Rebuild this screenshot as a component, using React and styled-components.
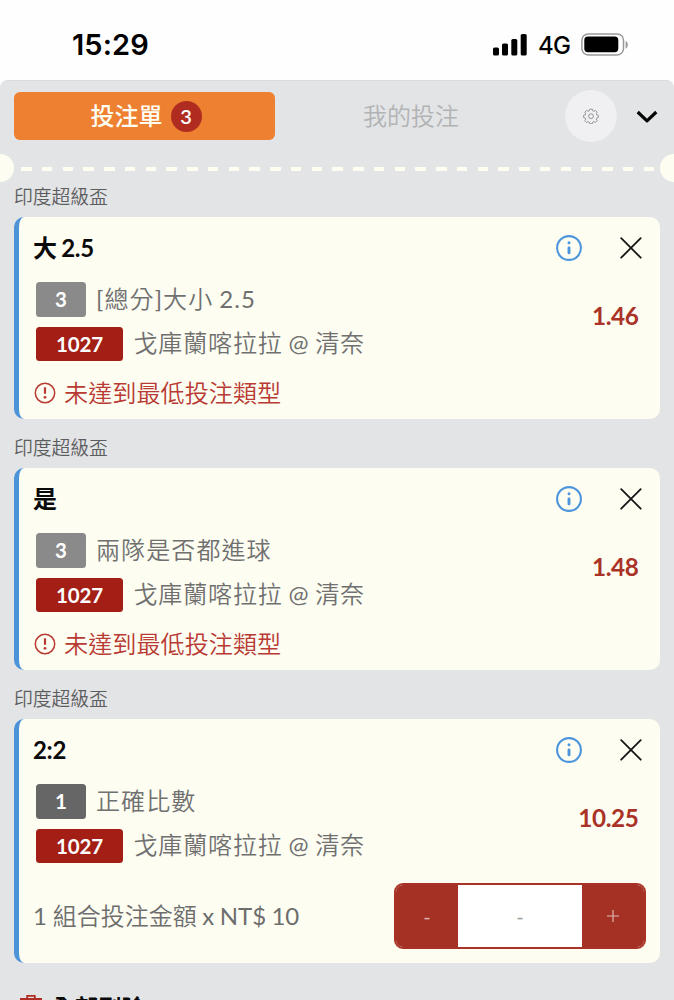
import React from "react";
import styled, { createGlobalStyle } from "styled-components";

const GlobalStyle = createGlobalStyle`
  * { box-sizing: border-box; }
  html, body { margin: 0; padding: 0; height: 1000px; overflow: hidden; background: #fff; }
  body { font-family: Lato, "Noto Sans CJK TC", sans-serif; }
  button { font: inherit; border: 0; padding: 0; background: none; color: inherit; }
  svg { display: block; flex: none; }
`;

const Screen = styled.main`
  width: 674px;
  height: 1000px;
  overflow: hidden;
  display: flex;
  flex-direction: column;
  background: #fefefe;
`;

const StatusBar = styled.header`
  flex: none;
  height: 80px;
  padding: 9px 46px 0 72px;
  display: flex;
  align-items: center;
  justify-content: space-between;
  font-family: Inter, sans-serif;
  color: #000;
`;

const Clock = styled.span`
  font-size: 29px;
  font-weight: 600;
  letter-spacing: 0.1px;
`;

const StatusIcons = styled.div`
  display: flex;
  align-items: center;
`;

const Network = styled.span`
  font-size: 24px;
  font-weight: 500;
  letter-spacing: -0.8px;
  width: 54px;
  padding-left: 11px;
  padding-top: 1px;
  white-space: nowrap;
`;

const Panel = styled.section`
  flex: 1;
  background: #e3e4e6;
  border-radius: 8px 8px 0 0;
  border-top: 1px solid #dbdcde;
  padding-top: 11px;
`;

const TabRow = styled.nav`
  height: 48px;
  padding: 0 15px 0 14px;
  display: flex;
  align-items: center;
`;

const Tab = styled.button`
  width: ${(p) => (p.$active ? 261 : 272)}px;
  height: 48px;
  padding-left: ${(p) => (p.$active ? 3 : 0)}px;
  border-radius: 6px;
  display: flex;
  align-items: center;
  justify-content: center;
  gap: 8px;
  font-size: 24px;
  line-height: 36px;
  font-weight: ${(p) => (p.$active ? 500 : 350)};
  background: ${(p) => (p.$active ? "#ee8031" : "transparent")};
  color: ${(p) => (p.$active ? "#fffdf2" : "#b2b3b5")};
`;

const TabCount = styled.span`
  width: 31px;
  height: 31px;
  border-radius: 50%;
  background: #b12c20;
  color: #fff;
  font-size: 20px;
  font-weight: 600;
  line-height: 31px;
  text-align: center;
`;

const RoundButton = styled.button`
  width: 52px;
  height: 52px;
  margin-left: 18px;
  border-radius: 50%;
  background: #f0f0f2;
  display: grid;
  place-items: center;
`;

const CollapseButton = styled.button`
  margin-left: 19px;
  padding-top: 1px;
`;

const TicketEdge = styled.div`
  height: 28px;
  margin-top: 14px;
  display: flex;
  align-items: center;
  justify-content: space-between;
`;

const Notch = styled.i`
  flex: none;
  width: 14px;
  height: 28px;
  background: #fdfdf2;
  border-radius: ${(p) => (p.$side === "left" ? "0 14px 14px 0" : "14px 0 0 14px")};
`;

const Dashes = styled.div`
  width: 633px;
  height: 4px;
  margin-top: 2px;
  background: repeating-linear-gradient(90deg, #fdfdf0 0 10.5px, transparent 10.5px 20.75px);
`;

const League = styled.h2`
  margin: 0;
  height: ${(p) => (p.$first ? 35 : 49)}px;
  padding: ${(p) => (p.$first ? 1 : 15)}px 14px 0;
  font-size: 18.8px;
  line-height: 28px;
  font-weight: 350;
  color: #5c5d5e;
`;

const Card = styled.article`
  height: ${(p) => (p.$tall ? 244 : 202)}px;
  margin: 0 14px;
  border-left: 5px solid #4c93d8;
  border-radius: 10px;
  background: #fdfdf2;
  padding: 0 14px;
`;

const CardHead = styled.div`
  height: 65px;
  padding: 0 4px 4px 0;
  display: flex;
  align-items: center;
`;

const Pick = styled.h3`
  flex: 1;
  margin: 0;
  font-size: 24px;
  line-height: 36px;
  font-weight: 700;
  letter-spacing: -0.3px;
  word-spacing: -1px;
  color: #0a0a0a;
`;

const IconButton = styled.button`
  margin-left: ${(p) => p.$gap || 0}px;
`;

const CardBody = styled.div`
  display: flex;
  justify-content: space-between;
  padding: 0 7.5px 0 3px;
`;

const Lines = styled.div`
  display: flex;
  flex-direction: column;
  gap: 10px;
`;

const Line = styled.div`
  height: 34.5px;
  display: flex;
  align-items: center;
  gap: ${(p) => p.$gap}px;
  font-size: 24px;
  letter-spacing: ${(p) => p.$tracking}px;
  word-spacing: -1.6px;
  font-weight: 350;
  color: #707070;
  white-space: nowrap;
`;

const LineText = styled.span`
  line-height: 36px;
  padding-bottom: 1px;
`;

const Latin = styled.span`
  font-weight: 400;
`;

const Tag = styled.span`
  width: ${(p) => p.$width}px;
  height: 34.5px;
  border-radius: 3.5px;
  background: ${(p) => p.$color};
  color: #fff;
  font-size: 20.5px;
  line-height: 35px;
  font-weight: 700;
  letter-spacing: -0.1px;
  text-align: center;
`;

const Odds = styled.strong`
  padding-top: 19px;
  font-size: 24.3px;
  line-height: 30px;
  font-weight: 700;
  letter-spacing: -0.4px;
  color: #aa3226;
`;

const Warning = styled.p`
  margin: 14px 0 0 1px;
  height: 36px;
  display: flex;
  align-items: center;
  gap: 8px;
  font-size: 24.15px;
  line-height: 36px;
  font-weight: 350;
  color: #b83a32;
`;

const StakeRow = styled.div`
  margin-top: 20px;
  display: flex;
  align-items: center;
  justify-content: space-between;
`;

const StakeLabel = styled.span`
  font-size: 24px;
  line-height: 36px;
  color: #6d6d6d;
  font-weight: 350;
  word-spacing: -0.8px;
`;

const Stepper = styled.div`
  width: 252px;
  height: 66px;
  display: flex;
  border: 2px solid #a83226;
  border-radius: 9px;
  overflow: hidden;
  background: #fff;
`;

const StepButton = styled.button`
  width: 62px;
  background: #a53125;
  color: #dfb7b0;
  font-size: 20px;
  display: grid;
  place-items: center;
`;

const Amount = styled.output`
  flex: 1;
  display: grid;
  place-items: center;
  color: #999;
  font-size: 20px;
`;

const DeleteAll = styled.button`
  margin: 27px 0 0 20px;
  display: flex;
  align-items: center;
  gap: 9px;
  font-size: 23.5px;
  line-height: 36px;
  font-weight: 700;
  color: #0a0a0a;
`;

const Signal = () => (
  <svg width="34" height="22" viewBox="0 0 34 22">
    <rect x="0" y="13.5" width="6" height="8" rx="1.6" />
    <rect x="9" y="9.5" width="6" height="12" rx="1.6" />
    <rect x="18.3" y="5" width="6" height="16.5" rx="1.6" />
    <rect x="27.7" y="0" width="6" height="21.5" rx="1.6" />
  </svg>
);

const Battery = () => (
  <svg width="47" height="23" viewBox="0 0 47 23">
    <rect x="0.9" y="0.9" width="41.6" height="21" rx="6.2" fill="none" stroke="#999" strokeWidth="1.5" />
    <rect x="3.3" y="3.6" width="34" height="15.6" rx="3.6" />
    <path d="M44.6 8v7.6c1.4-.5 2.2-2 2.2-3.8s-.8-3.3-2.2-3.8z" fill="#999" />
  </svg>
);

const Gear = () => (
  <svg width="16" height="16" viewBox="0 0 16 16" fill="none" stroke="#8a8a8c" strokeWidth="0.9" strokeLinejoin="round">
    <path d="M6.7 1.2h2.6l.5 1.7 1 .4 1.6-.9 1.8 1.8-.9 1.6.4 1 1.7.5v2.2l-1.7.6-.4 1 .9 1.5-1.8 1.8-1.6-.8-1 .4-.5 1.7H6.7l-.5-1.7-1-.4-1.6.8-1.8-1.8.9-1.5-.4-1L.6 9.5V7.3l1.7-.5.4-1-.9-1.6 1.8-1.8 1.6.9 1-.4z" />
    <circle cx="8" cy="8.2" r="2.4" />
  </svg>
);

const Chevron = () => (
  <svg width="22" height="14" viewBox="0 0 22 14" fill="none" stroke="#050505" strokeWidth="3.2" strokeLinejoin="round">
    <path d="M1.7 2L11 10.8 20.3 2" />
  </svg>
);

const Info = () => (
  <svg width="26" height="26" viewBox="0 0 26 26" fill="none" stroke="#4c95dc">
    <circle cx="13" cy="13" r="11.9" strokeWidth="2.1" />
    <circle cx="13" cy="7.8" r="1.5" fill="#4c95dc" stroke="none" />
    <path d="M13 12.9v5" strokeWidth="2.9" strokeLinecap="round" />
  </svg>
);

const Close = () => (
  <svg width="22" height="22" viewBox="0 0 22 22" fill="none" stroke="#151515" strokeWidth="1.8" strokeLinecap="round">
    <path d="M1.2 1.2l19.5 19.5M20.7 1.2L1.2 20.7" />
  </svg>
);

const Alert = () => (
  <svg width="22" height="22" viewBox="0 0 22 22" fill="none" stroke="#b83a32">
    <circle cx="11" cy="11" r="9.7" strokeWidth="1.5" />
    <path d="M11 5.3v6.5" strokeWidth="2.2" />
    <circle cx="11" cy="15.3" r="1.4" fill="#b83a32" stroke="none" />
  </svg>
);

const Plus = () => (
  <svg width="12" height="12" viewBox="0 0 12 12" stroke="#e0b5af" strokeWidth="1.2">
    <path d="M6 0v12M0 6h12" />
  </svg>
);

const Bin = () => (
  <svg width="22" height="28" viewBox="0 0 22 28" fill="none" stroke="#b02d23" strokeWidth="1.8">
    <path d="M0 5h22M7.2 5V1.9h7.600V5M3 5V25h16V5M8 9.500v11M14 9.500v11" />
  </svg>
);

const bets = [
  { pick: "大 2.5", count: "3", tone: "#8a8a8a", market: <><Latin>[</Latin>總分<Latin>]</Latin>大小 <Latin>2.5</Latin></>, odds: "1.46" },
  { pick: "是", count: "3", tone: "#8a8a8a", market: "兩隊是否都進球", odds: "1.48" },
  { pick: "2:2", count: "1", tone: "#666666", market: "正確比數", odds: "10.25", stake: true },
];

const BetCard = ({ bet }) => (
  <Card $tall={bet.stake}>
    <CardHead>
      <Pick>{bet.pick}</Pick>
      <IconButton aria-label="資訊"><Info /></IconButton>
      <IconButton $gap={38.5} aria-label="移除"><Close /></IconButton>
    </CardHead>
    <CardBody>
      <Lines>
        <Line $gap={10} $tracking={1.1}>
          <Tag $width={50} $color={bet.tone}>{bet.count}</Tag>
          <LineText>{bet.market}</LineText>
        </Line>
        <Line $gap={10.5} $tracking={0.87}>
          <Tag $width={87} $color="#a31e15">1027</Tag>
          <LineText>戈庫蘭喀拉拉 <Latin>@</Latin> 清奈</LineText>
        </Line>
      </Lines>
      <Odds>{bet.odds}</Odds>
    </CardBody>
    {bet.stake ? (
      <StakeRow>
        <StakeLabel><Latin>1</Latin> 組合投注金額 <Latin>x NT$ 10</Latin></StakeLabel>
        <Stepper>
          <StepButton>-</StepButton>
          <Amount>-</Amount>
          <StepButton aria-label="增加"><Plus /></StepButton>
        </Stepper>
      </StakeRow>
    ) : (
      <Warning><Alert />未達到最低投注類型</Warning>
    )}
  </Card>
);

export default function App() {
  return (
    <Screen>
      <GlobalStyle />
      <StatusBar>
        <Clock>15:29</Clock>
        <StatusIcons>
          <Signal />
          <Network>4G</Network>
          <Battery />
        </StatusIcons>
      </StatusBar>
      <Panel>
        <TabRow>
          <Tab $active>投注單<TabCount>3</TabCount></Tab>
          <Tab>我的投注</Tab>
          <RoundButton aria-label="設定"><Gear /></RoundButton>
          <CollapseButton aria-label="收合"><Chevron /></CollapseButton>
        </TabRow>
        <TicketEdge>
          <Notch $side="left" />
          <Dashes />
          <Notch $side="right" />
        </TicketEdge>
        {bets.map((bet, i) => (
          <React.Fragment key={bet.pick}>
            <League $first={i === 0}>印度超級盃</League>
            <BetCard bet={bet} />
          </React.Fragment>
        ))}
        <DeleteAll><Bin />全部刪除</DeleteAll>
      </Panel>
    </Screen>
  );
}
